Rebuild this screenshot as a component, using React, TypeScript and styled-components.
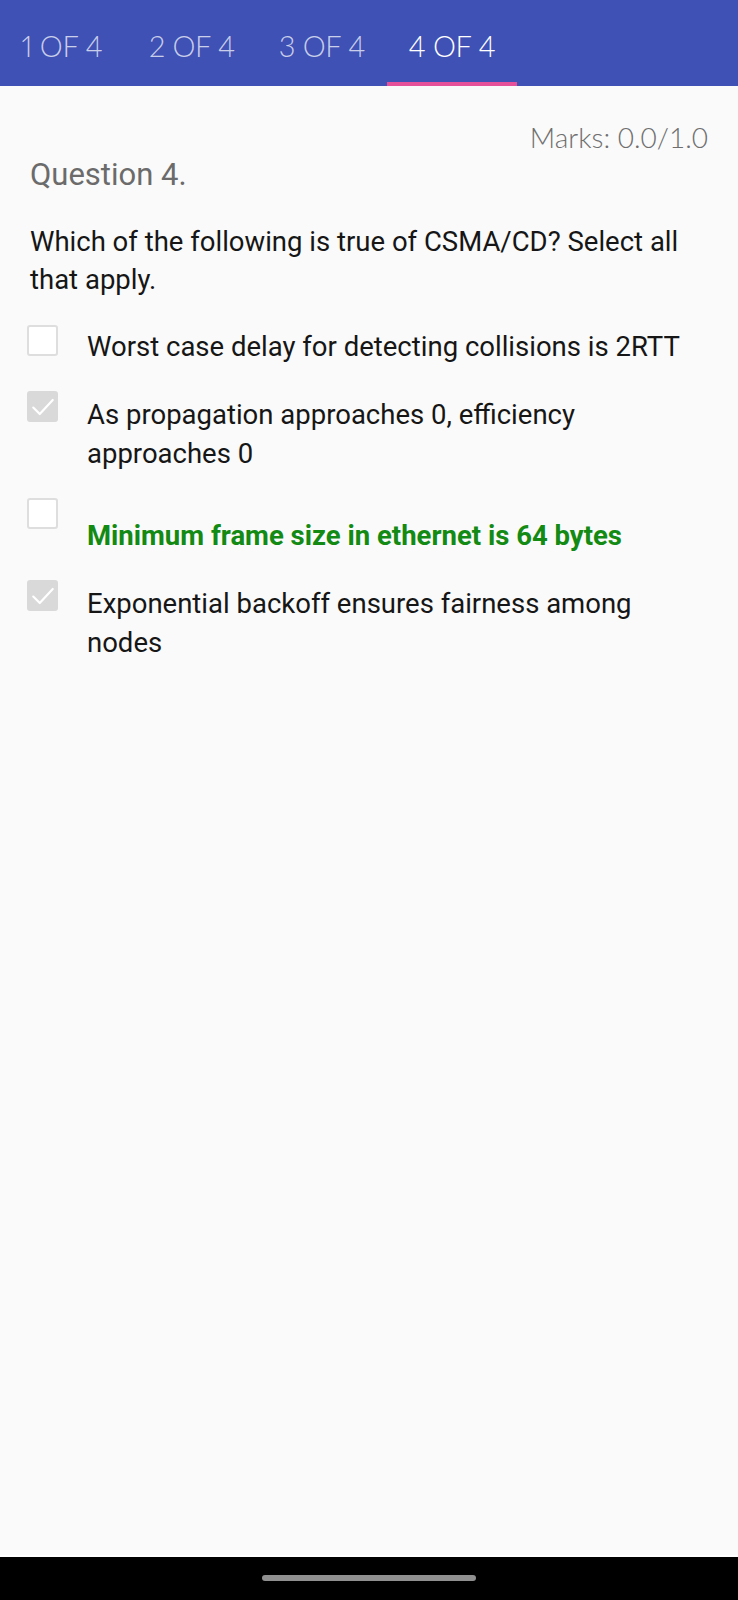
import React from "react";
import styled, { createGlobalStyle } from "styled-components";

const GlobalStyle = createGlobalStyle`
  html, body { margin: 0; padding: 0; background: #fafafa; }
  * { box-sizing: border-box; }
`;

const Page = styled.div`
  width: 738px;
  min-height: 1600px;
  display: flex;
  flex-direction: column;
  background: #fafafa;
`;

const Header = styled.header`
  height: 86px;
  background: #3f51b5;
  display: flex;
  align-items: stretch;
  margin-left: -3px;
`;

const Tab = styled.div<{ $active?: boolean }>`
  position: relative;
  width: 130px;
  display: flex;
  align-items: center;
  justify-content: center;
  padding-top: 4px;
  font-family: Lato, "Open Sans", sans-serif;
  font-weight: 300;
  font-size: 29px;
  letter-spacing: -0.3px;
  font-variant-numeric: proportional-nums;
  color: ${(p) => (p.$active ? "#ffffff" : "rgba(255,255,255,0.72)")};
  white-space: nowrap;
  &::after {
    content: "";
    position: absolute;
    left: 0;
    right: 0;
    bottom: 0;
    height: 4px;
    background: ${(p) => (p.$active ? "#e6509a" : "transparent")};
  }
`;

const Content = styled.main`
  flex: 1;
  padding: 35px 30px 0 30px;
  display: flex;
  flex-direction: column;
`;

const Marks = styled.div`
  align-self: flex-end;
  font-family: Lato, "Open Sans", sans-serif;
  font-weight: 300;
  font-size: 28px;
  line-height: 32px;
  color: #6f6f6f;
`;

const QuestionTitle = styled.h2`
  margin: 4px 0 0 0;
  font-family: Roboto, "Noto Sans", sans-serif;
  font-weight: 400;
  font-size: 31px;
  line-height: 36px;
  color: #6b6b6b;
`;

const QuestionText = styled.p`
  margin: 30px 0 0 0;
  font-family: Roboto, "Noto Sans", sans-serif;
  font-size: 27.5px;
  line-height: 38px;
  color: #161616;
`;

const Options = styled.div`
  margin-top: 26px;
  display: flex;
  flex-direction: column;
  gap: 25px;
`;

const Row = styled.label`
  display: flex;
  align-items: flex-start;
  gap: 29px;
  margin-left: -3px;
`;

const Box = styled.span<{ $checked?: boolean }>`
  flex: none;
  width: 31px;
  height: 31px;
  border-radius: 3px;
  display: flex;
  align-items: center;
  justify-content: center;
  background: ${(p) => (p.$checked ? "#d9d9d9" : "#ffffff")};
  border: ${(p) => (p.$checked ? "none" : "2.5px solid #dedede")};
`;

const OptionText = styled.span<{ $offset: number; $correct?: boolean }>`
  margin-top: ${(p) => p.$offset}px;
  font-family: Roboto, "Noto Sans", sans-serif;
  font-size: 27.5px;
  line-height: 39px;
  font-weight: ${(p) => (p.$correct ? 700 : 400)};
  color: ${(p) => (p.$correct ? "#138a13" : "#161616")};
  flex: 1;
`;

const NavBar = styled.div`
  height: 45px;
  background: #000;
  border-top: 2px solid #ffffff;
  display: flex;
  justify-content: center;
  padding-top: 18px;
`;

const Pill = styled.div`
  width: 214px;
  height: 6px;
  border-radius: 3px;
  background: #8f8f8f;
`;

const Check = () => (
  <svg width="26" height="26" viewBox="0 0 24 24" fill="none">
    <path d="M3 12.5 L9 18.5 L21 5.5" stroke="#ffffff" strokeWidth="2" strokeLinecap="round" strokeLinejoin="round" />
  </svg>
);

const options = [
  { text: "Worst case delay for detecting collisions is 2RTT", checked: false, offset: 2 },
  { text: "As propagation approaches 0, efficiency approaches 0", checked: true, offset: 4 },
  { text: "Minimum frame size in ethernet is 64 bytes", checked: false, offset: 18, correct: true },
  { text: "Exponential backoff ensures fairness among nodes", checked: true, offset: 4 },
];

export default function App() {
  return (
    <Page>
      <GlobalStyle />
      <Header>
        <Tab>1 OF 4</Tab>
        <Tab>2 OF 4</Tab>
        <Tab>3 OF 4</Tab>
        <Tab $active>4 OF 4</Tab>
      </Header>
      <Content>
        <Marks>Marks: 0.0/1.0</Marks>
        <QuestionTitle>Question 4.</QuestionTitle>
        <QuestionText>Which of the following is true of CSMA/CD? Select all that apply.</QuestionText>
        <Options>
          {options.map((o) => (
            <Row key={o.text}>
              <Box $checked={o.checked}>{o.checked && <Check />}</Box>
              <OptionText $offset={o.offset} $correct={o.correct}>
                {o.text}
              </OptionText>
            </Row>
          ))}
        </Options>
      </Content>
      <NavBar>
        <Pill />
      </NavBar>
    </Page>
  );
}
